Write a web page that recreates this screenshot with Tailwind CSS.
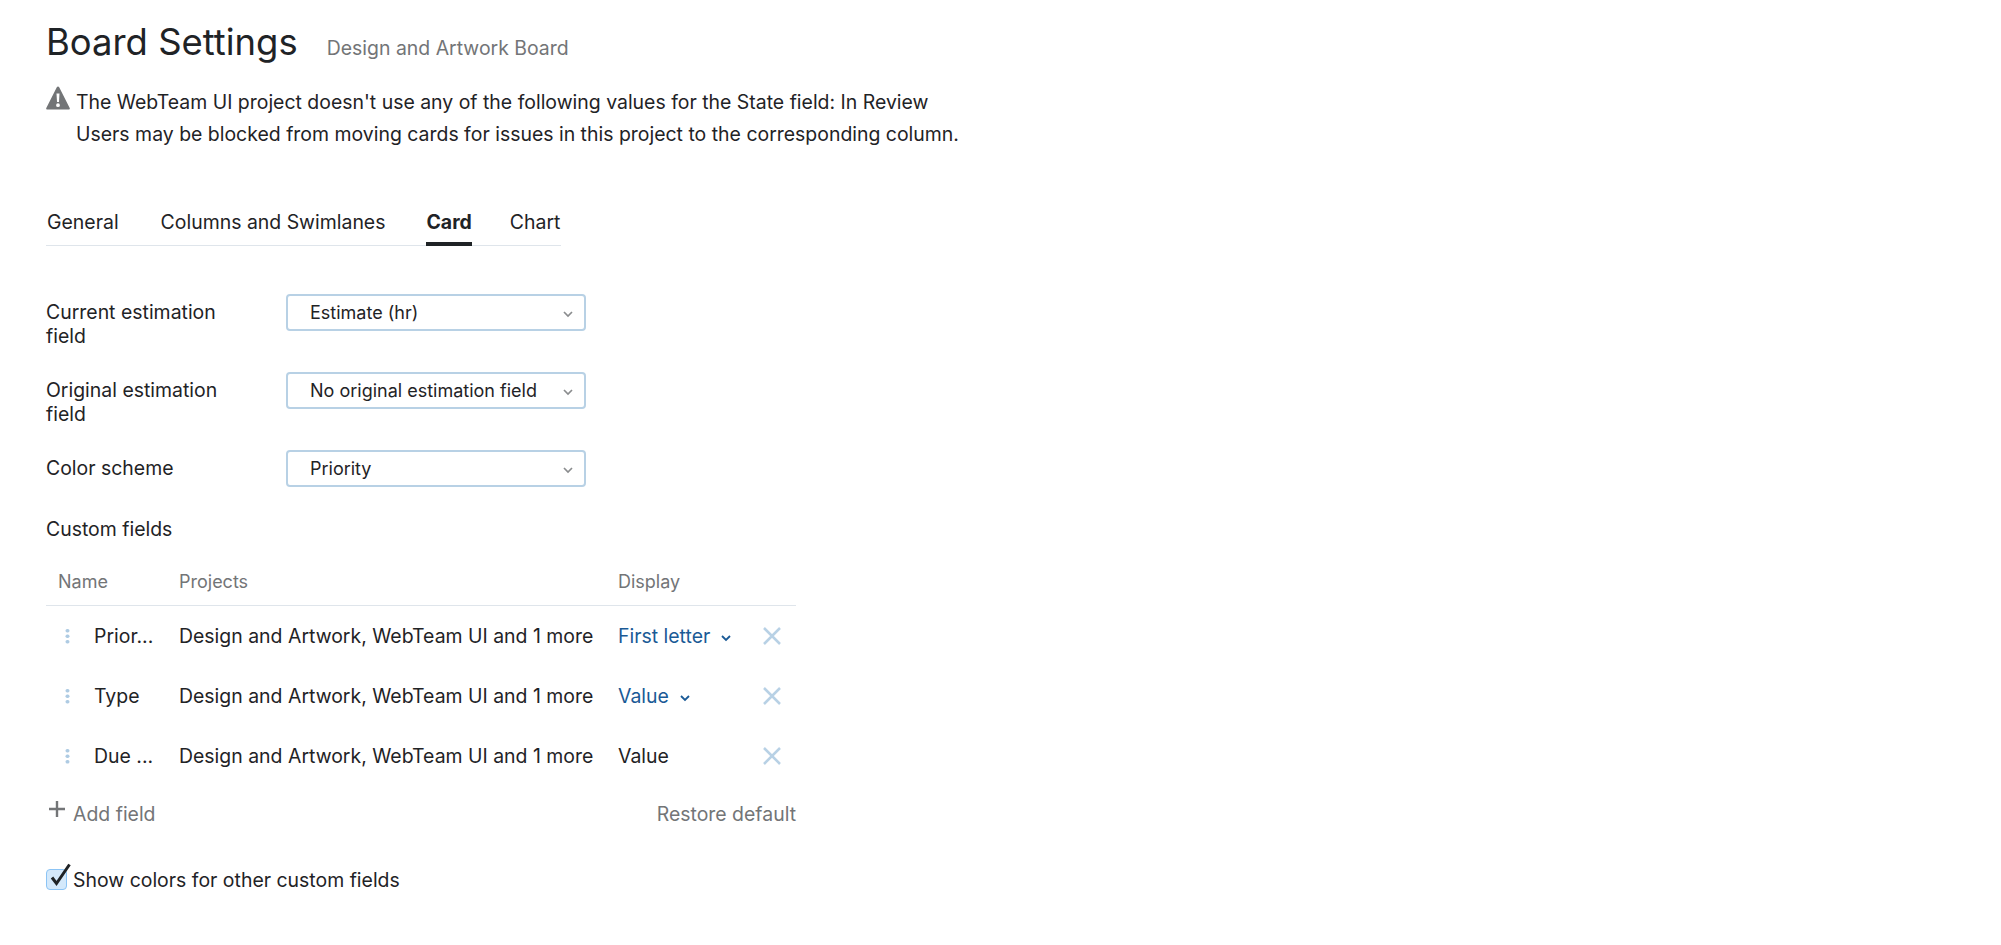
<!DOCTYPE html>
<html lang="en">
<head>
    <meta charset="UTF-8">
    <title>Board Settings</title>
    <script src="https://cdn.jsdelivr.net/npm/@tailwindcss/browser@4"></script>
</head>
<body class="bg-white font-['Inter',sans-serif] text-[19.44px] leading-[24px] text-[#1f2326]">
    <div class="pl-[46px] pt-[18px] w-[1100px]">
        <!-- Title -->
        <div class="flex items-baseline gap-[29px] h-[48px]">
            <h1 class="text-[36.45px] leading-[48px] font-normal">Board Settings</h1>
            <span class="text-[#737577]">Design and Artwork Board</span>
        </div>

        <!-- Warning -->
        <div class="flex mt-[20px] leading-[32px]">
            <svg class="w-[24px] h-[24px] mr-[6px] shrink-0" viewBox="0 0 24 24"><path fill="#737577" fill-rule="evenodd" d="M12 .5c.5 0 .9.3 1.200.8l10.500 20.600c.4.8-.1 1.600-1 1.600H1.300c-.9 0-1.400-.8-1-1.600L10.800 1.300c.3-.5.7-.8 1.200-.8zM10.500 7.500l.5 8.500h2l.5-8.500h-3zM12 17.300a1.900 1.900 0 1 0 0 3.800 1.900 1.900 0 0 0 0-3.800z"/></svg>
            <p>The WebTeam UI project doesn't use any of the following values for the State field: In Review<br>Users may be blocked from moving cards for issues in this project to the corresponding column.</p>
        </div>

        <!-- Tabs -->
        <div class="flex mt-[53px] w-[515px] h-[43px] border-b border-[#dfe5eb]">
            <a class="ml-[1px] h-[43px] pt-[7px]">General</a>
            <a class="ml-[42px] h-[43px] pt-[7px]">Columns and Swimlanes</a>
            <a class="ml-[41px] h-[43px] pt-[7px] font-bold border-b-[4px] border-[#1f2326]">Card</a>
            <a class="ml-[38px] h-[43px] pt-[7px]">Chart</a>
        </div>

        <!-- Selects -->
        <div class="mt-[48px] flex flex-col gap-[24px]">
            <div class="flex">
                <label class="w-[240px] pr-[40px] pt-[6px]">Current estimation field</label>
                <div class="w-[300px] h-[37px] flex items-center justify-between pl-[22px] pr-[10px] border-2 border-[#b8d1e5] rounded-[4px] text-[18px]">
                    <span>Estimate (hr)</span>
                    <svg class="w-[12px] h-[12px] mt-[3px]" viewBox="0 0 12 12"><path d="M2 4l4 4 4-4" fill="none" stroke="#8a8c8e" stroke-width="1.700"/></svg>
                </div>
            </div>
            <div class="flex">
                <label class="w-[240px] pr-[40px] pt-[6px]">Original estimation field</label>
                <div class="w-[300px] h-[37px] flex items-center justify-between pl-[22px] pr-[10px] border-2 border-[#b8d1e5] rounded-[4px] text-[18px]">
                    <span>No original estimation field</span>
                    <svg class="w-[12px] h-[12px] mt-[3px]" viewBox="0 0 12 12"><path d="M2 4l4 4 4-4" fill="none" stroke="#8a8c8e" stroke-width="1.700"/></svg>
                </div>
            </div>
            <div class="flex">
                <label class="w-[240px] pr-[40px] pt-[6px]">Color scheme</label>
                <div class="w-[300px] h-[37px] flex items-center justify-between pl-[22px] pr-[10px] border-2 border-[#b8d1e5] rounded-[4px] text-[18px]">
                    <span>Priority</span>
                    <svg class="w-[12px] h-[12px] mt-[3px]" viewBox="0 0 12 12"><path d="M2 4l4 4 4-4" fill="none" stroke="#8a8c8e" stroke-width="1.700"/></svg>
                </div>
            </div>
        </div>

        <!-- Custom fields -->
        <div class="mt-[30px]">Custom fields</div>
        <div class="w-[750px] mt-[25px]">
            <div class="flex h-[40px] border-b border-[#dfe5eb] text-[#737577] text-[18px] pt-[4px]">
                <span class="w-[133px] pl-[12px]">Name</span>
                <span class="w-[439px]">Projects</span>
                <span>Display</span>
            </div>
            <div class="flex items-center h-[60px]">
                <svg class="w-[24px] ml-[15px] h-[16px] shrink-0" viewBox="0 0 24 16"><g fill="#aecbe3"><rect x="4.500" y="1" width="4" height="3.500" rx="1.700"/><rect x="4.500" y="6.500" width="4" height="3.500" rx="1.700"/><rect x="4.500" y="12" width="4" height="3.500" rx="1.700"/></g></svg>
                <span class="w-[94px] pl-[9px]">Prior...</span>
                <span class="w-[439px] whitespace-nowrap">Design and Artwork, WebTeam UI and 1 more</span>
                <span class="w-[144px] flex items-center gap-[10px] text-[#1a5a96]">First letter
                    <svg class="w-[12px] h-[12px] mt-[3px]" viewBox="0 0 12 12"><path d="M2 4l4 4 4-4" fill="none" stroke="#1a5a96" stroke-width="1.800"/></svg>
                </span>
                <svg class="w-[20px] h-[20px]" viewBox="0 0 20 20"><path d="M2 2l16 16M18 2L2 18" stroke="#b8d1e5" stroke-width="2.500" fill="none"/></svg>
            </div>
            <div class="flex items-center h-[60px]">
                <svg class="w-[24px] ml-[15px] h-[16px] shrink-0" viewBox="0 0 24 16"><g fill="#aecbe3"><rect x="4.500" y="1" width="4" height="3.500" rx="1.700"/><rect x="4.500" y="6.500" width="4" height="3.500" rx="1.700"/><rect x="4.500" y="12" width="4" height="3.500" rx="1.700"/></g></svg>
                <span class="w-[94px] pl-[9px]">Type</span>
                <span class="w-[439px] whitespace-nowrap">Design and Artwork, WebTeam UI and 1 more</span>
                <span class="w-[144px] flex items-center gap-[10px] text-[#1a5a96]">Value
                    <svg class="w-[12px] h-[12px] mt-[3px]" viewBox="0 0 12 12"><path d="M2 4l4 4 4-4" fill="none" stroke="#1a5a96" stroke-width="1.800"/></svg>
                </span>
                <svg class="w-[20px] h-[20px]" viewBox="0 0 20 20"><path d="M2 2l16 16M18 2L2 18" stroke="#b8d1e5" stroke-width="2.500" fill="none"/></svg>
            </div>
            <div class="flex items-center h-[60px]">
                <svg class="w-[24px] ml-[15px] h-[16px] shrink-0" viewBox="0 0 24 16"><g fill="#aecbe3"><rect x="4.500" y="1" width="4" height="3.500" rx="1.700"/><rect x="4.500" y="6.500" width="4" height="3.500" rx="1.700"/><rect x="4.500" y="12" width="4" height="3.500" rx="1.700"/></g></svg>
                <span class="w-[94px] pl-[9px]">Due ...</span>
                <span class="w-[439px] whitespace-nowrap">Design and Artwork, WebTeam UI and 1 more</span>
                <span class="w-[144px]">Value</span>
                <svg class="w-[20px] h-[20px]" viewBox="0 0 20 20"><path d="M2 2l16 16M18 2L2 18" stroke="#b8d1e5" stroke-width="2.500" fill="none"/></svg>
            </div>
            <div class="flex justify-between items-center h-[56px] text-[#737577]">
                <span class="flex items-center">
                    <svg class="w-[18px] h-[18px] ml-[2px] mr-[7px] mb-[10px]" viewBox="0 0 18 18"><path d="M9 1v16M1 9h16" stroke="#737577" stroke-width="2.400" fill="none"/></svg>
                    Add field
                </span>
                <span>Restore default</span>
            </div>
        </div>

        <!-- Checkbox -->
        <div class="flex items-center mt-[26px]">
            <span class="relative w-[21px] h-[21px] mr-[6px] mb-[2px] rounded-[4px] border border-[#8cc4f5] bg-[#d4e9fb]">
                <svg class="absolute left-[1px] top-[-8px] w-[24px] h-[26px]" viewBox="0 0 24 26"><path d="M4 15.500l4.500 6L21.500 2.500" fill="none" stroke="#1f2326" stroke-width="3"/></svg>
            </span>
            <span>Show colors for other custom fields</span>
        </div>
    </div>
</body>
</html>
